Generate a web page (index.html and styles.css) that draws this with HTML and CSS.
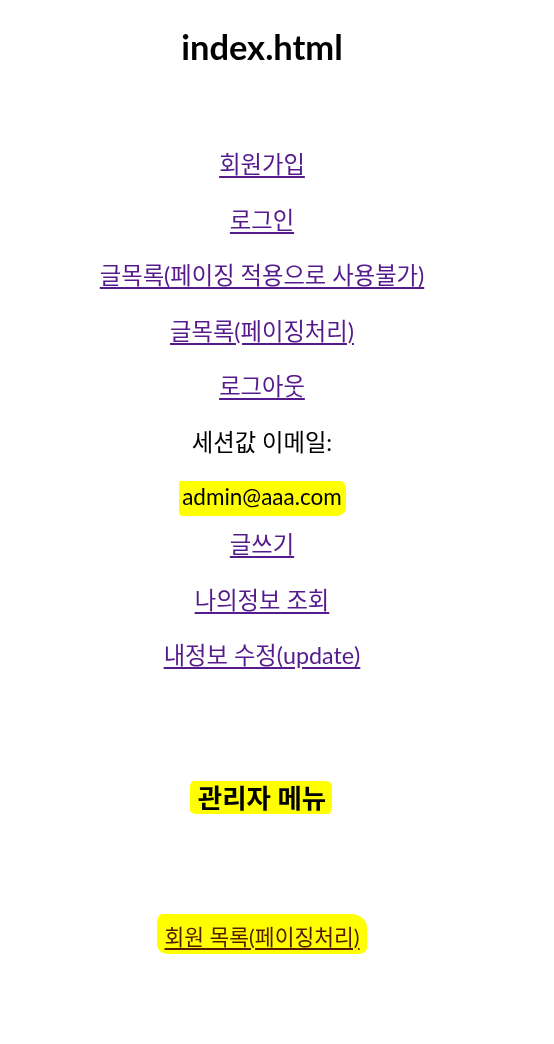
FILE: index.html
```html
<!DOCTYPE html>
<html lang="ko">
<head>
<meta charset="utf-8">
<title>index.html</title>
<link rel="stylesheet" href="styles.css">
</head>
<body>
<main class="page">
  <h1 class="title">index.html</h1>
  <div class="menu">
    <p class="item"><a href="#" class="link">회원가입</a></p>
    <p class="item"><a href="#" class="link">로그인</a></p>
    <p class="item"><a href="#" class="link">글목록(페이징 적용으로 사용불가)</a></p>
    <p class="item"><a href="#" class="link">글목록(페이징처리)</a></p>
    <p class="item"><a href="#" class="link">로그아웃</a></p>
    <p class="item">세션값 이메일:</p>
    <p class="email"><span class="mark mark-email">admin@aaa.com</span></p>
    <p class="item"><a href="#" class="link">글쓰기</a></p>
    <p class="item"><a href="#" class="link">나의정보 조회</a></p>
    <p class="item"><a href="#" class="link">내정보 수정(update)</a></p>
  </div>
  <h2 class="admin-title"><span class="mark mark-admin">관리자 메뉴</span></h2>
  <p class="admin-item"><span class="mark mark-list"><a href="#" class="link">회원 목록(페이징처리)</a></span></p>
</main>
</body>
</html>
```

FILE: styles.css
```css
html, body {
  margin: 0;
  padding: 0;
  background: #ffffff;
}
body {
  font-family: "Lato", "Noto Sans CJK KR", sans-serif;
  color: #000000;
}
.page {
  width: 524px;
  padding-top: 25px;
  text-align: center;
}
.title {
  font-size: 34.5px;
  font-weight: 700;
  line-height: 44px;
  margin: 0 0 79px 0;
}
.menu {
  display: flex;
  flex-direction: column;
  align-items: center;
}
.item {
  font-size: 23.3px;
  line-height: 33.5px;
  margin: 0 0 22px 0;
}
.email {
  font-size: 22.5px;
  line-height: 33px;
  margin: -1px 0 15px 0;
}
.link {
  color: #551a8b;
  text-decoration: underline;
  text-underline-offset: 3px;
}
.mark {
  position: relative;
  display: inline-block;
}
.mark::after {
  content: "";
  position: absolute;
  background: #ffff00;
  mix-blend-mode: multiply;
  pointer-events: none;
}
.mark-email::after {
  left: -3px;
  right: -4px;
  top: 1px;
  bottom: -3px;
  border-radius: 2px 6px 10px 3px / 3px 8px 8px 5px;
}
.admin-title {
  font-size: 26.5px;
  font-weight: 700;
  line-height: 34px;
  margin: 86px 0 0 0;
}
.mark-admin::after {
  left: -8px;
  right: -6px;
  top: 0;
  bottom: 1px;
  border-radius: 4px 8px 4px 6px / 6px 4px 8px 4px;
}
.admin-item {
  font-size: 21.5px;
  line-height: 33px;
  margin: 106px 0 0 0;
}
.mark-list::after {
  left: -7px;
  right: -7px;
  top: -7px;
  bottom: 0;
  border-radius: 6px 16px 8px 10px / 8px 14px 6px 10px;
}
```
